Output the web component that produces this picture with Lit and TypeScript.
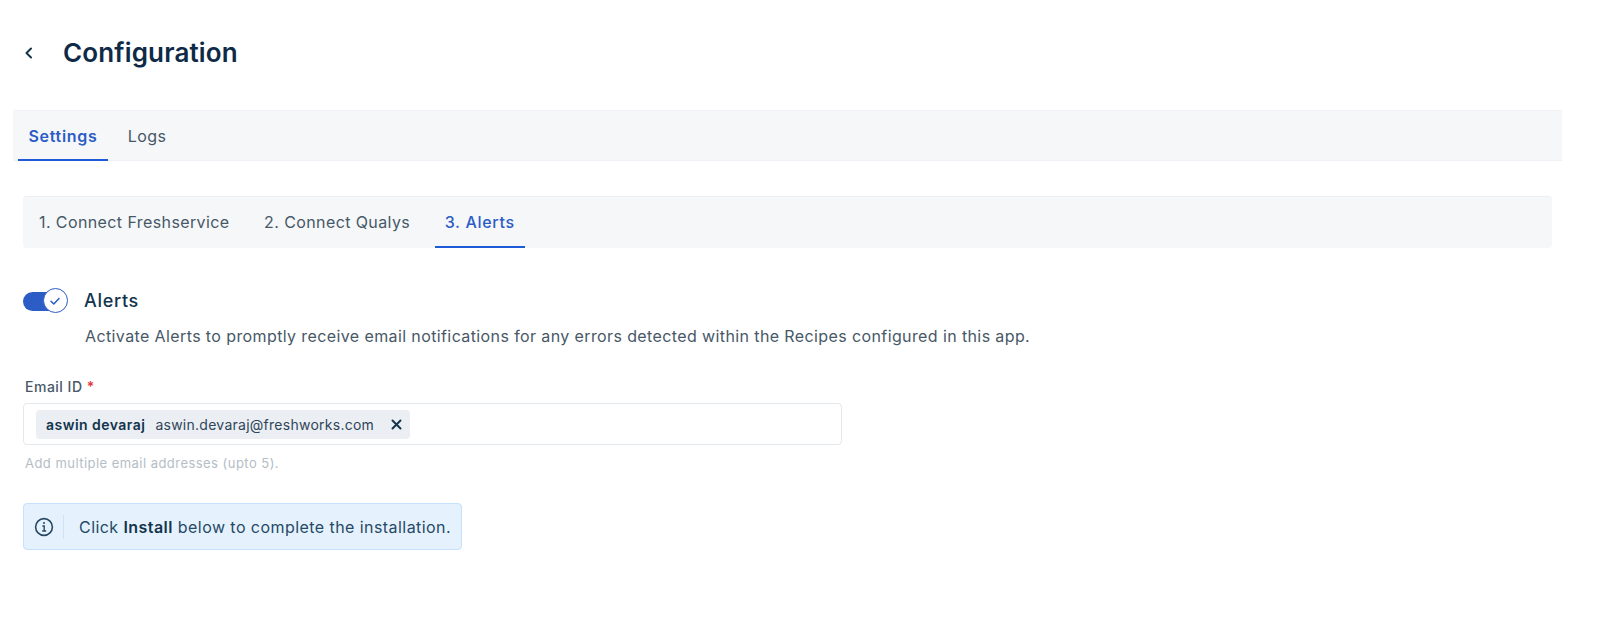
import { LitElement, html, css } from "lit";
import { customElement } from "lit/decorators.js";

@customElement("app-root")
export class AppRoot extends LitElement {
  static styles = css`
    :host { display: block; min-height: 639px; background: #fff; font-family: Inter, "Noto Sans", sans-serif; color: #12344d; box-sizing: border-box; padding: 32px 38px 0 13px; }
    .head { display: flex; align-items: center; height: 42px; padding-left: 9px; gap: 27px; }
    .head svg { width: 14px; height: 14px; display: block; flex: none; }
    h1 { margin: 0; font-size: 26px; line-height: 42px; font-weight: 600; color: #0e2a47; letter-spacing: 0.15px; }
    .tabs { display: flex; background: #f5f7f9; box-sizing: border-box; }
    .main { margin-top: 36px; height: 51px; border-top: 1px solid #f0f2f5; border-bottom: 1px solid #eef1f5; padding-left: 5px; gap: 0; }
    .tab { display: flex; align-items: center; justify-content: center; font-size: 16px; letter-spacing: 0.4px; color: #475867; box-sizing: border-box; border-bottom: 2px solid transparent; }
    .tab.on { color: #2c5cc5; border-bottom-color: #1f5bd8; letter-spacing: 0.7px; }
    .main .tab { height: 50px; padding-top: 2px; }
    .main .tab.on { font-weight: 600; width: 90px; }
    .main .tab.logs { width: 78px; }
    .content { padding: 35px 10px 0; }
    .sub { height: 52px; border-radius: 4px; border-top: 1px solid #ebeef2; padding-left: 6px; }
    .sub .tab { height: 51px; padding: 0 10px; margin-right: 14.5px; }
    .sub .tab.on { font-weight: 500; }
    .toggle-row { display: flex; margin-top: 40px; }
    .toggle { position: relative; width: 45px; height: 27px; flex: none; }
    .track { display: block; width: 36px; height: 19px; margin-top: 4px; border-radius: 10px; background: #2c5cc5; }
    .knob { position: absolute; left: 20px; top: 0; width: 25px; height: 25px; box-sizing: border-box; border-radius: 50%; background: #fff; border: 1px solid #2c5cc5; display: flex; align-items: center; justify-content: center; }
    .knob svg { width: 12px; height: 12px; display: block; margin-left: -2px; }
    .toggle-text { margin-left: 16px; }
    .toggle-title { font-size: 18px; line-height: 26px; font-weight: 500; color: #12344d; letter-spacing: 0.7px; }
    .toggle-desc { margin-top: 10px; font-size: 16px; line-height: 24px; letter-spacing: 0.39px; color: #475867; margin-left: 1px; }
    label { display: block; margin-top: 30px; padding-left: 2px; font-size: 14px; line-height: 18px; font-weight: 500; letter-spacing: 0.5px; color: #475867; }
    label b { color: #e43538; font-weight: 600; }
    .input { margin-top: 7px; width: 819px; height: 42px; box-sizing: border-box; border: 1px solid #e3e8ed; border-radius: 4px; display: flex; align-items: center; padding-left: 12px; }
    .chip { display: flex; align-items: center; height: 29px; width: 374px; box-sizing: border-box; padding: 0 8px 0 10px; background: #ebeff3; border-radius: 4px; font-size: 14px; white-space: nowrap; }
    .chip strong { font-weight: 600; color: #12344d; letter-spacing: 0.47px; }
    .chip span { margin-left: 10px; color: #2f4559; letter-spacing: 0.26px; }
    .chip svg { width: 11px; height: 11px; margin-left: auto; display: block; }
    .help { margin-top: 9px; padding-left: 2px; font-size: 13px; line-height: 18px; letter-spacing: 0.46px; color: #b5bdc5; }
    .info { margin-top: 31px; width: 439px; height: 47px; box-sizing: border-box; display: flex; align-items: center; background: #e5f2fd; border: 1px solid #c5e1fd; border-radius: 4px; padding-left: 10px; font-size: 16px; letter-spacing: 0.44px; color: #264966; white-space: nowrap; }
    .info svg { width: 20px; height: 20px; display: block; flex: none; }
    .info i { display: block; width: 1px; height: 24px; background: #cfe3f7; margin: 0 15px 0 9px; flex: none; }
    .info strong { font-weight: 600; color: #12344d; }
  `;

  render() {
    return html`
      <div class="head">
      <svg viewBox="0 0 14 14" fill="none" stroke="#12344d" stroke-width="2" stroke-linecap="round" stroke-linejoin="round"><path d="M9 2.5 4.5 7 9 11.5"/></svg>
      <h1>Configuration</h1></div>
      <div class="tabs main"><div class="tab on">Settings</div><div class="tab logs">Logs</div></div>
      <div class="content">
        <div class="tabs sub">
          <div class="tab">1. Connect Freshservice</div>
          <div class="tab">2. Connect Qualys</div>
          <div class="tab on">3. Alerts</div>
        </div>
        <div class="toggle-row">
          <div class="toggle"><span class="track"></span><span class="knob"><svg viewBox="0 0 12 12" fill="none" stroke="#2c5cc5" stroke-width="1.5" stroke-linecap="round" stroke-linejoin="round"><path d="M2 6.2 4.8 9 10 3.5"/></svg></span></div>
          <div class="toggle-text">
            <div class="toggle-title">Alerts</div>
            <div class="toggle-desc">Activate Alerts to promptly receive email notifications for any errors detected within the Recipes configured in this app.</div>
          </div>
        </div>
        <label>Email ID <b>*</b></label>
        <div class="input"><div class="chip"><strong>aswin devaraj</strong><span>aswin.devaraj@freshworks.com</span>
          <svg viewBox="0 0 11 11" fill="none" stroke="#12344d" stroke-width="2" stroke-linecap="round"><path d="M1.5 1.5l8 8M9.5 1.5l-8 8"/></svg></div></div>
        <div class="help">Add multiple email addresses (upto 5).</div>
        <div class="info">
          <svg viewBox="0 0 20 20" fill="none" stroke="#264966" stroke-width="1.6"><circle cx="10" cy="10" r="8.4"/><path d="M8.4 9h1.8v5M8.2 14h4" stroke-width="1.4"/><circle cx="10" cy="6" r="1" fill="#264966" stroke="none"/></svg>
          <i></i>
          <div>Click <strong>Install</strong> below to complete the installation.</div>
        </div>
      </div>
    `;
  }
}
